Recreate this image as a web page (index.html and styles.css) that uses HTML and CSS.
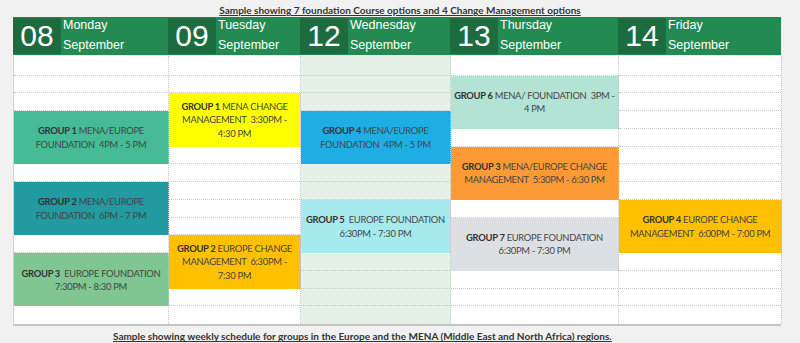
FILE: index.html
```html
<!DOCTYPE html>
<html>
<head>
<meta charset="utf-8">
<link rel="stylesheet" href="styles.css">
</head>
<body>
<div class="page">
  <div class="caption cap-top"><span>Sample showing 7 foundation Course options and 4 Change Management options</span></div>
  <div class="sheet">
    <div class="head">
      <div class="day"><div class="num">08</div><div class="lbl"><span>Monday</span><span>September</span></div></div>
      <div class="day"><div class="num">09</div><div class="lbl"><span>Tuesday</span><span>September</span></div></div>
      <div class="day"><div class="num">12</div><div class="lbl"><span>Wednesday</span><span>September</span></div></div>
      <div class="day"><div class="num">13</div><div class="lbl"><span>Thursday</span><span>September</span></div></div>
      <div class="day"><div class="num">14</div><div class="lbl"><span>Friday</span><span>September</span></div></div>
    </div>
    <div class="grid">
      <div class="col c1"><i></i><i></i><i></i><i></i><i></i><i></i><i></i><i></i><i></i><i></i><i></i><i></i><i></i><i></i><i></i></div>
      <div class="col c2"><i></i><i></i><i></i><i></i><i></i><i></i><i></i><i></i><i></i><i></i><i></i><i></i><i></i><i></i><i></i></div>
      <div class="col c3 wed"><i></i><i></i><i></i><i></i><i></i><i></i><i></i><i></i><i></i><i></i><i></i><i></i><i></i><i></i><i></i></div>
      <div class="col c4"><i></i><i></i><i></i><i></i><i></i><i></i><i></i><i></i><i></i><i></i><i></i><i></i><i></i><i></i><i></i></div>
      <div class="col c5"><i></i><i></i><i></i><i></i><i></i><i></i><i></i><i></i><i></i><i></i><i></i><i></i><i></i><i></i><i></i></div>

      <div class="ev c1 r4 teal"><p><b>GROUP 1</b> MENA/EUROPE<br>FOUNDATION&nbsp; 4PM - 5 PM</p></div>
      <div class="ev c1 r8 dteal"><p><b>GROUP 2</b> MENA/EUROPE<br>FOUNDATION&nbsp; 6PM - 7 PM</p></div>
      <div class="ev c1 r12 sage"><p><b>GROUP 3</b>&nbsp; EUROPE FOUNDATION<br>7:30PM - 8:30 PM</p></div>

      <div class="ev c2 r3 yellow"><p><b>GROUP 1</b> MENA CHANGE<br>MANAGEMENT&nbsp; 3:30PM -<br>4:30 PM</p></div>
      <div class="ev c2 r11 amber"><p><b>GROUP 2</b> EUROPE CHANGE<br>MANAGEMENT&nbsp; 6:30PM -<br>7:30 PM</p></div>

      <div class="ev c3 r4 blue"><p><b>GROUP 4</b> MENA/EUROPE<br>FOUNDATION&nbsp; 4PM - 5 PM</p></div>
      <div class="ev c3 r9 cyan"><p><b>GROUP 5</b>&nbsp; EUROPE FOUNDATION<br>6:30PM - 7:30 PM</p></div>

      <div class="ev c4 r2 mint"><p><b>GROUP 6</b> MENA/ FOUNDATION&nbsp; 3PM -<br>4 PM</p></div>
      <div class="ev c4 r6 orange"><p><b>GROUP 3</b> MENA/EUROPE CHANGE<br>MANAGEMENT&nbsp; 5:30PM - 6:30 PM</p></div>
      <div class="ev c4 r10 grey"><p><b>GROUP 7</b> EUROPE FOUNDATION<br>6:30PM - 7:30 PM</p></div>

      <div class="ev c5 r9 amber"><p><b>GROUP 4</b> EUROPE CHANGE<br>MANAGEMENT&nbsp; 6:00PM - 7:00 PM</p></div>
    </div>
  </div>
  <div class="caption cap-bottom"><span>Sample showing weekly schedule for groups in the Europe and the MENA (Middle East and North Africa) regions.</span></div>
</div>
</body>
</html>
```
FILE: styles.css
```css
* { box-sizing: border-box; }
html, body { margin: 0; padding: 0; }
body {
  background: #f1f1f1;
  font-family: "Lato", "Liberation Sans", sans-serif;
  width: 800px;
  height: 343px;
  overflow: hidden;
}
.page { width: 800px; }

.caption {
  font-family: "Lato", "Liberation Sans", sans-serif;
  font-weight: 700;
  font-size: 10px;
  color: #333;
}
.caption span { text-decoration: underline; }
.cap-top {
  height: 17px;
  line-height: 17px;
  padding-top: 2px;
  text-align: center;
}
.cap-bottom {
  padding-left: 113px;
  padding-top: 4px;
  line-height: 12px;
}

.sheet {
  margin-left: 13px;
  width: 768px;
}

.head, .grid {
  display: grid;
  grid-template-columns: 155px 132px 150px 168px 163px;
}
.head {
  height: 38px;
  background: #238a51;
}
.day {
  display: flex;
  align-items: stretch;
}
.num {
  width: 48px;
  margin: 1px 0;
  background: #1d6c3f;
  color: #fff;
  font-family: "Liberation Sans", sans-serif;
  font-size: 30px;
  display: flex;
  align-items: center;
  justify-content: center;
}
.lbl {
  display: flex;
  flex-direction: column;
  padding-left: 2px;
  color: #fff;
  font-family: "Liberation Sans", sans-serif;
  font-size: 12.5px;
}
.lbl span { height: 19px; line-height: 19px; }
.lbl span:first-child { line-height: 17px; }

.grid {
  margin-top: 1px;
  grid-template-rows: 19.5px repeat(14, 17.77px);
  background: #fff;
  border-left: 1px solid #d0d0d0;
  border-bottom: 2px solid #c4c4c4;
  height: 270.3px;
}
.col {
  grid-row: 1 / -1;
  display: flex;
  flex-direction: column;
  border-right: 1px dotted #c8c8c8;
}
.col i {
  display: block;
  height: 17.77px;
  border-bottom: 1px dotted #c8c8c8;
}
.col i:first-child { height: 19.5px; }
.col i:last-child { border-bottom: none; }
.wed { background: #e5f1e6; }

.c1 { grid-column: 1; }
.c2 { grid-column: 2; }
.c3 { grid-column: 3; }
.c4 { grid-column: 4; }
.c5 { grid-column: 5; }

.ev {
  display: flex;
  align-items: center;
  justify-content: center;
  text-align: center;
  font-family: "Lato", "Liberation Sans", sans-serif;
  font-size: 9.4px;
  letter-spacing: -0.3px;
  line-height: 13.3px;
  color: #454545;
  z-index: 1;
  border-right: 1px dotted #c8c8c8;
}
.ev p { margin: 0; white-space: nowrap; }
.ev b { color: #333; font-weight: 700; }

.r2 { grid-row: 2 / span 3; }
.r3 { grid-row: 3 / span 3; }
.r4 { grid-row: 4 / span 3; }
.r6 { grid-row: 6 / span 3; }
.r8 { grid-row: 8 / span 3; }
.r9 { grid-row: 9 / span 3; }
.r10 { grid-row: 10 / span 3; }
.r11 { grid-row: 11 / span 3; }
.r12 { grid-row: 12 / span 3; }

.teal { background: #46bb96; }
.dteal { background: #219aa0; }
.sage { background: #80c692; }
.yellow { background: #ffff00; }
.amber { background: #ffc000; }
.blue { background: #1faee3; }
.cyan { background: #a6eaee; }
.mint { background: #b3e3d4; }
.orange { background: #fd9a35; }
.grey { background: #dde0e3; }
```
